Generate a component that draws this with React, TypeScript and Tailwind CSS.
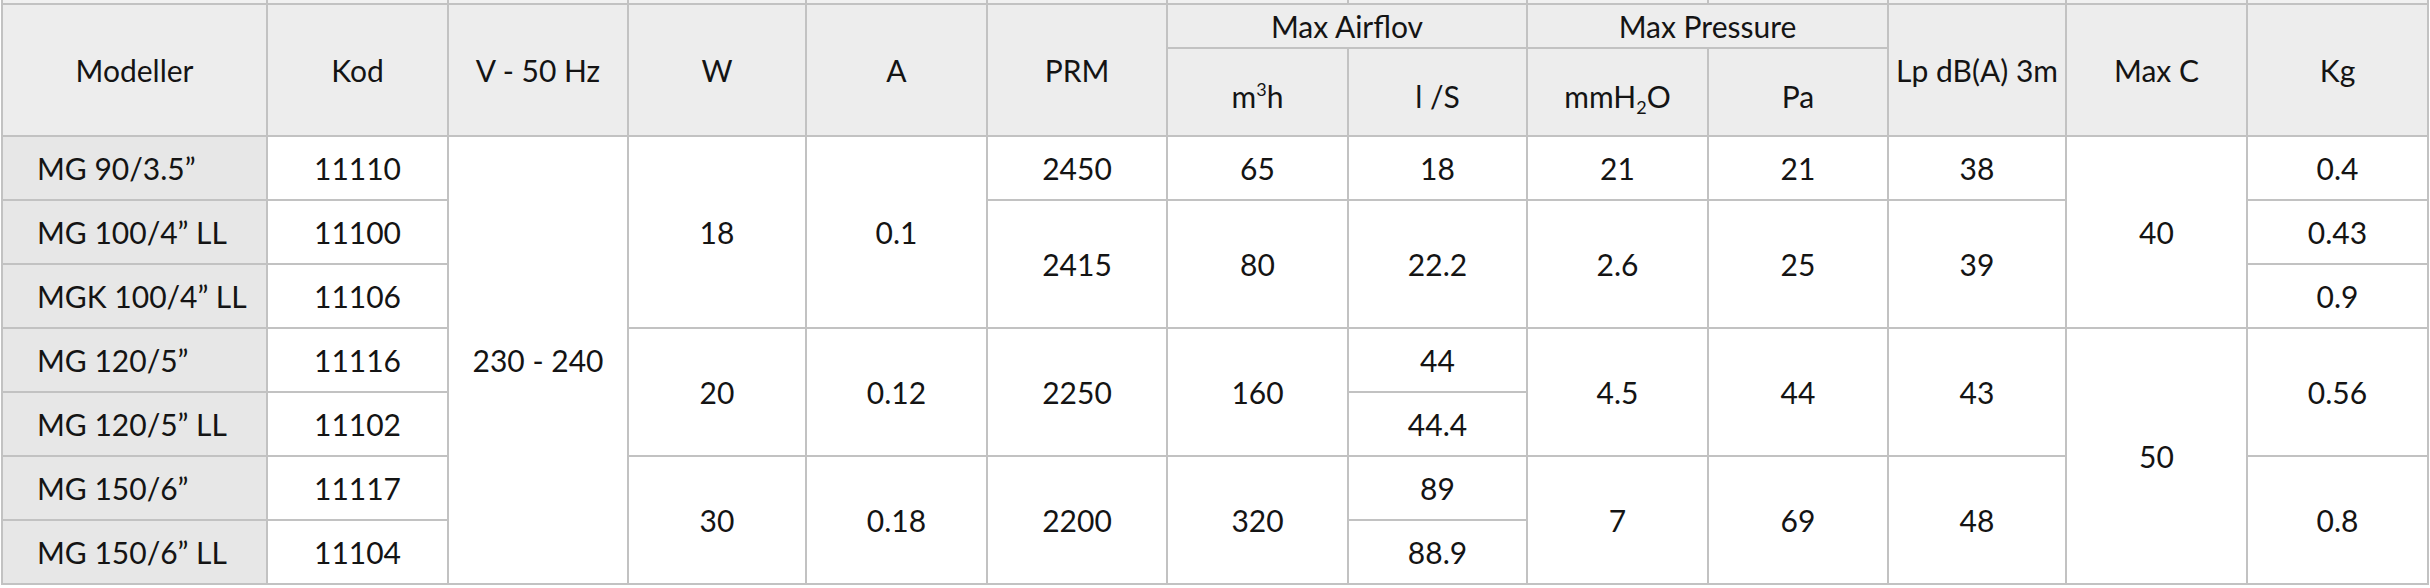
import React from 'react';

type Cell = { v: React.ReactNode; rs?: number };

const rows: { model: string; code: string; cells: Cell[] }[] = [
  {
    model: 'MG 90/3.5”',
    code: '11110',
    cells: [
      { v: '230 - 240', rs: 7 },
      { v: '18', rs: 3 },
      { v: '0.1', rs: 3 },
      { v: '2450' },
      { v: '65' },
      { v: '18' },
      { v: '21' },
      { v: '21' },
      { v: '38' },
      { v: '40', rs: 3 },
      { v: '0.4' },
    ],
  },
  {
    model: 'MG 100/4” LL',
    code: '11100',
    cells: [
      { v: '2415', rs: 2 },
      { v: '80', rs: 2 },
      { v: '22.2', rs: 2 },
      { v: '2.6', rs: 2 },
      { v: '25', rs: 2 },
      { v: '39', rs: 2 },
      { v: '0.43' },
    ],
  },
  { model: 'MGK 100/4” LL', code: '11106', cells: [{ v: '0.9' }] },
  {
    model: 'MG 120/5”',
    code: '11116',
    cells: [
      { v: '20', rs: 2 },
      { v: '0.12', rs: 2 },
      { v: '2250', rs: 2 },
      { v: '160', rs: 2 },
      { v: '44' },
      { v: '4.5', rs: 2 },
      { v: '44', rs: 2 },
      { v: '43', rs: 2 },
      { v: '50', rs: 4 },
      { v: '0.56', rs: 2 },
    ],
  },
  { model: 'MG 120/5” LL', code: '11102', cells: [{ v: '44.4' }] },
  {
    model: 'MG 150/6”',
    code: '11117',
    cells: [
      { v: '30', rs: 2 },
      { v: '0.18', rs: 2 },
      { v: '2200', rs: 2 },
      { v: '320', rs: 2 },
      { v: '89' },
      { v: '7', rs: 2 },
      { v: '69', rs: 2 },
      { v: '48', rs: 2 },
      { v: '0.8', rs: 2 },
    ],
  },
  { model: 'MG 150/6” LL', code: '11104', cells: [{ v: '88.9' }] },
];

const widths = [
  'w-[265px]', 'w-[181px]', 'w-[180px]', 'w-[178px]', 'w-[181px]', 'w-[180px]', 'w-[181px]',
  'w-[179px]', 'w-[181px]', 'w-[180px]', 'w-[178px]', 'w-[181px]', 'w-[181px]',
];

const bd = 'border-2 border-[#c2c2c2]';
const hd = `${bd} bg-[#ededed] text-center align-middle font-normal p-0`;
const td = `${bd} bg-white text-center align-middle p-0`;

export default function App() {
  return (
    <div className="w-[2430px] h-[588px] overflow-hidden bg-white pl-px text-[30px] leading-none text-[#141414] font-['Lato','Open_Sans',sans-serif]">
      <table className="table-fixed border-collapse">
        <colgroup>
          {widths.map((w, i) => (
            <col key={i} className={w} />
          ))}
        </colgroup>
        <thead>
          {/* tail of the row above */}
          <tr className="h-[4px]">
            {widths.map((_, i) => (
              <td key={i} className="border-x-2 border-[#c2c2c2] bg-[#f1f1f1] p-0" />
            ))}
          </tr>
          <tr className="h-[44px]">
            <th rowSpan={2} className={hd}>Modeller</th>
            <th rowSpan={2} className={hd}>Kod</th>
            <th rowSpan={2} className={hd}>V - 50 Hz</th>
            <th rowSpan={2} className={hd}>W</th>
            <th rowSpan={2} className={hd}>A</th>
            <th rowSpan={2} className={hd}>PRM</th>
            <th colSpan={2} className={hd}>Max Airflov</th>
            <th colSpan={2} className={hd}>Max Pressure</th>
            <th rowSpan={2} className={hd}>Lp dB(A) 3m</th>
            <th rowSpan={2} className={hd}>Max C</th>
            <th rowSpan={2} className={hd}>Kg</th>
          </tr>
          <tr className="h-[88px]">
            <th className={hd}>
              <span className="relative top-[4px]">
                m<span className="text-[18px] relative -top-[12px]">3</span>h
              </span>
            </th>
            <th className={hd}>
              <span className="relative top-[4px]">l /S</span>
            </th>
            <th className={hd}>
              <span className="relative top-[4px]">
                mmH<span className="text-[18px] relative top-[6px]">2</span>O
              </span>
            </th>
            <th className={hd}>
              <span className="relative top-[4px]">Pa</span>
            </th>
          </tr>
        </thead>
        <tbody>
          {rows.map((r) => (
            <tr key={r.code} className="h-[64px]">
              <td className={`${bd} bg-[#e7e7e7] text-left align-middle p-0 pl-[34px]`}>{r.model}</td>
              <td className={td}>{r.code}</td>
              {r.cells.map((c, i) => (
                <td key={i} rowSpan={c.rs} className={td}>
                  {c.v}
                </td>
              ))}
            </tr>
          ))}
        </tbody>
      </table>
    </div>
  );
}
